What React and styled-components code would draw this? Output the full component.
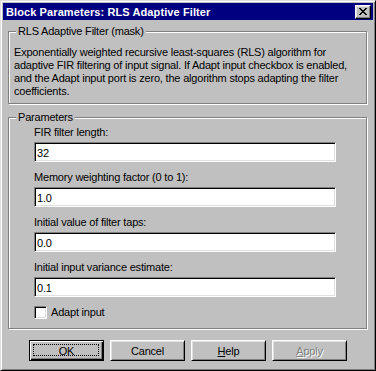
import styled, { createGlobalStyle } from "styled-components";

const GlobalStyle = createGlobalStyle`
  html, body {
    margin: 0;
    padding: 0;
    background: #c0c0c0;
  }
  body {
    font-family: "Liberation Sans", Arial, sans-serif;
    font-size: 11px;
    letter-spacing: -0.2px;
    color: #000;
  }
`;

const Window = styled.div`
  box-sizing: border-box;
  width: 376px;
  height: 371px;
  background: #c0c0c0;
  border: 1px solid;
  border-color: #dfdfdf #000 #000 #dfdfdf;
  box-shadow: inset 1px 1px 0 #fff, inset -1px -1px 0 #808080;
  padding: 2px;
  display: flex;
  flex-direction: column;
`;

const TitleBar = styled.div`
  height: 17px;
  background: #000080;
  color: #fff;
  display: flex;
  align-items: center;
  justify-content: space-between;
  padding: 0 2px 0 3px;
`;

const Title = styled.span`
  font-weight: bold;
  font-size: 11px;
  letter-spacing: 0.1px;
`;

const CloseButton = styled.button`
  box-sizing: border-box;
  width: 16px;
  height: 14px;
  padding: 0;
  background: #c0c0c0;
  border: 1px solid;
  border-color: #fff #000 #000 #fff;
  box-shadow: inset -1px -1px 0 #808080, inset 1px 1px 0 #dfdfdf;
  display: flex;
  align-items: center;
  justify-content: center;
`;

const Body = styled.div`
  padding: 11px 6px 0 5px;
  display: flex;
  flex-direction: column;
`;

const Group = styled.div`
  position: relative;
  border: 1px solid #808080;
  box-shadow: 1px 1px 0 #fff, inset 1px 1px 0 #fff;
  margin-bottom: ${(p) => p.$gap || 0}px;
  padding: ${(p) => p.$pad};
`;

const GroupLabel = styled.span`
  position: absolute;
  top: -7px;
  left: 7px;
  padding: 0 2px;
  background: #c0c0c0;
  line-height: 13px;
`;

const Description = styled.p`
  margin: 0;
  line-height: 13px;
  white-space: nowrap;
`;

const Field = styled.div`
  display: flex;
  flex-direction: column;
  margin-bottom: 8px;
`;

const FieldLabel = styled.label`
  line-height: 14px;
  margin-bottom: 3px;
`;

const TextInput = styled.input`
  box-sizing: border-box;
  height: 20px;
  width: 302px;
  margin: 0;
  padding: 1px 2px 0;
  font-family: inherit;
  font-size: 11px;
  letter-spacing: inherit;
  background: #fff;
  border: 1px solid;
  border-color: #808080 #fff #fff #808080;
  box-shadow: inset 1px 1px 0 #000, inset -1px -1px 0 #dfdfdf;
  outline: none;
`;

const CheckRow = styled.label`
  display: flex;
  align-items: center;
  height: 14px;
  gap: 4px;
`;

const CheckBox = styled.span`
  box-sizing: border-box;
  width: 13px;
  height: 13px;
  background: #fff;
  border: 1px solid;
  border-color: #808080 #fff #fff #808080;
  box-shadow: inset 1px 1px 0 #000, inset -1px -1px 0 #dfdfdf;
`;

const ButtonRow = styled.div`
  display: flex;
  gap: 6px;
  padding-left: 21px;
  margin-top: 11px;
`;

const Button = styled.button`
  box-sizing: border-box;
  width: 75px;
  height: 21px;
  padding: 0;
  font-family: inherit;
  font-size: 11px;
  letter-spacing: inherit;
  color: ${(p) => (p.disabled ? "#808080" : "#000")};
  text-shadow: ${(p) => (p.disabled ? "1px 1px 0 #fff" : "none")};
  background: #c0c0c0;
  border: 1px solid;
  border-color: ${(p) => (p.$default ? "#000" : "#fff #000 #000 #fff")};
  box-shadow: ${(p) =>
    p.$default
      ? "inset 1px 1px 0 #fff, inset -1px -1px 0 #000, inset -2px -2px 0 #808080"
      : "inset 1px 1px 0 #dfdfdf, inset -1px -1px 0 #808080"};
  display: flex;
  align-items: center;
  justify-content: center;
  position: relative;
`;

const FocusRing = styled.span`
  position: absolute;
  inset: 3px 4px 4px 3px;
  border: 1px dotted #000;
`;

const Key = styled.u`
  text-decoration: underline;
`;

const fields = [
  { label: "FIR filter length:", value: "32" },
  { label: "Memory weighting factor (0 to 1):", value: "1.0" },
  { label: "Initial value of filter taps:", value: "0.0" },
  { label: "Initial input variance estimate:", value: "0.1" },
];

const App = () => {
  return (
    <>
      <GlobalStyle />
      <Window>
        <TitleBar>
          <Title>Block Parameters: RLS Adaptive Filter</Title>
          <CloseButton aria-label="Close">
            <svg width="8" height="7" viewBox="0 0 8 7">
              <path
                d="M0 0h2v1h1v1h2v-1h1v-1h2v1h-1v1h-1v1h-1v1h1v1h1v1h1v1h-2v-1h-1v-1h-2v1h-1v1h-2v-1h1v-1h1v-1h1v-1h-1v-1h-1v-1h-1z"
                fill="#000"
              />
            </svg>
          </CloseButton>
        </TitleBar>
        <Body>
          <Group $gap={13} $pad="14px 6px 5px 5px">
            <GroupLabel>RLS Adaptive Filter (mask)</GroupLabel>
            <Description>
              Exponentially weighted recursive least-squares (RLS) algorithm for
              <br />
              adaptive FIR filtering of input signal. If Adapt input checkbox is enabled,
              <br />
              and the Adapt input port is zero, the algorithm stops adapting the filter
              <br />
              coefficients.
            </Description>
          </Group>
          <Group $pad="7px 29px 9px 25px">
            <GroupLabel>Parameters</GroupLabel>
            {fields.map((f) => (
              <Field key={f.label}>
                <FieldLabel>{f.label}</FieldLabel>
                <TextInput defaultValue={f.value} />
              </Field>
            ))}
            <CheckRow>
              <CheckBox />
              Adapt input
            </CheckRow>
          </Group>
          <ButtonRow>
            <Button $default>
              <FocusRing />
              OK
            </Button>
            <Button>Cancel</Button>
            <Button>
              <Key>H</Key>elp
            </Button>
            <Button disabled>
              <Key>A</Key>pply
            </Button>
          </ButtonRow>
        </Body>
      </Window>
    </>
  );
};

export default App;
